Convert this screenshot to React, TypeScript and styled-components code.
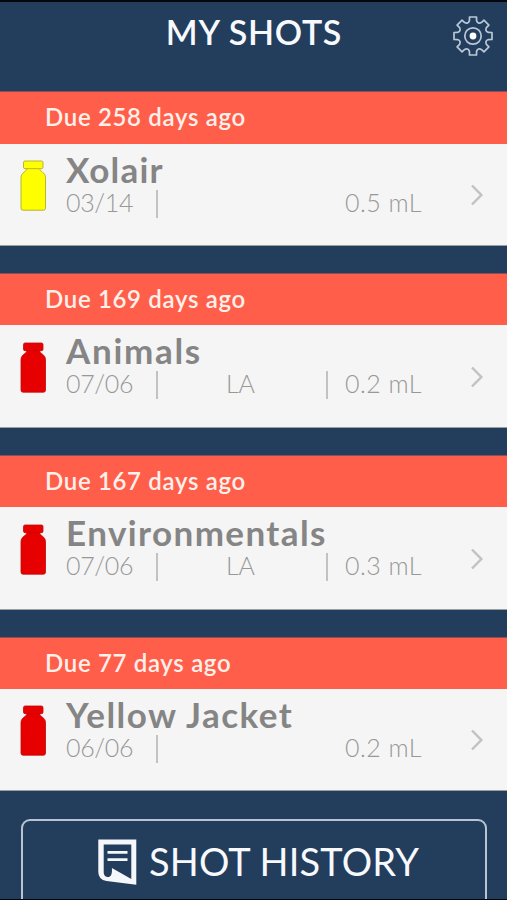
import React from "react";
import styled, { createGlobalStyle } from "styled-components";

const GlobalStyle = createGlobalStyle`
  * { box-sizing: border-box; }
  body { margin: 0; background: #000; }
`;

const Screen = styled.main`
  width: 507px;
  height: 900px;
  overflow: hidden;
  display: flex;
  flex-direction: column;
  background: #233d5d;
  border-top: 2px solid #04080d;
  border-bottom: 1px solid #02060b;
  font-family: Lato, "Open Sans", sans-serif;
`;

const Header = styled.header`
  flex: none;
  height: 89.4px;
  display: grid;
  grid-template-columns: 54px 1fr 54px;
  align-items: start;
`;

const Title = styled.h1`
  grid-column: 2;
  margin: 0;
  padding: 9px 0 0 1px;
  font-size: 34px;
  line-height: 41px;
  font-weight: 600;
  letter-spacing: 0.75px;
  text-align: center;
  color: #f7f9fc;
`;

const SettingsButton = styled.button`
  width: 42px;
  height: 42px;
  margin: 13px 0 0 -1px;
  padding: 0;
  border: 0;
  background: none;
  svg { display: block; }
`;

const ShotList = styled.section`
  flex: none;
  display: flex;
  flex-direction: column;
  gap: 27.1px;
`;

const Card = styled.article`
  height: 154.7px;
  display: flex;
  flex-direction: column;
`;

const DueBanner = styled.div`
  flex: none;
  height: 52.2px;
  padding: 10px 0 0 45px;
  border-top: 1px solid #8d4d59;
  background: #ff5f4a;
  color: #fff0ea;
  font-size: 24px;
  line-height: 30px;
  font-weight: 600;
  letter-spacing: 0.67px;
`;

const ShotRow = styled.div`
  flex: 1;
  display: grid;
  grid-template-columns: 66px 1fr 41px;
  background: #f5f5f5;
  border-bottom: 1px solid #9c9f9f;
`;

const VialCell = styled.div`
  padding: 16.5px 0 0 20px;
  svg { display: block; }
`;

const Details = styled.div`
  padding-top: 5px;
`;

const ShotName = styled.h2<{ $tracking: number }>`
  margin: 0;
  font-size: 35px;
  line-height: 40px;
  font-weight: 700;
  letter-spacing: ${(p) => p.$tracking}px;
  white-space: nowrap;
  color: #858585;
`;

const Meta = styled.div`
  height: 29px;
  display: grid;
  grid-template-columns: 89.500px 172px 1fr;
  font-size: 25px;
  line-height: 27px;
  font-weight: 300;
  color: #989898;
`;

const DateText = styled.span`
  letter-spacing: -0.35px;
`;

const Arm = styled.span<{ $divided: boolean }>`
  margin-top: 1px;
  height: 28px;
  padding-right: 2px;
  line-height: 25px;
  text-align: center;
  border-left: 2px solid #c2c2c2;
  border-right: ${(p) => (p.$divided ? "2px solid #c2c2c2" : "0")};
`;

const Dose = styled.span`
  padding-left: 17.5px;
  letter-spacing: 0.45px;
  white-space: nowrap;
`;

const ChevronCell = styled.div`
  padding: 40.5px 0 0 4px;
  svg { display: block; }
`;

const HistoryButton = styled.button`
  flex: none;
  width: 466px;
  height: 100px;
  margin: 27.5px 0 0 21px;
  padding: 18px 0 0 75px;
  display: flex;
  align-items: flex-start;
  gap: 12px;
  border: 2px solid #b9c4d1;
  border-radius: 9px;
  background: none;
  color: #f7f9fd;
  font-family: inherit;
  font-size: 38px;
  line-height: 45px;
  font-weight: 400;
  letter-spacing: 0.15px;
  text-align: left;
  white-space: nowrap;
  svg { flex: none; }
`;

const gearPath = (() => {
  const at = (r: number, deg: number) => {
    const a = (deg * Math.PI) / 180;
    return `${(21 + r * Math.sin(a)).toFixed(2)} ${(21 - r * Math.cos(a)).toFixed(2)}`;
  };
  let d = "";
  for (let i = 0; i < 8; i++) {
    const c = i * 45;
    d += `${i ? "L" : "M"}${at(15.8, c - 13)} L${at(19.3, c - 10.5)} L${at(19.3, c + 10.5)} L${at(15.8, c + 13)} Q${at(12.7, c + 22.5)} ${at(15.8, c + 32)} `;
  }
  return d + "Z";
})();

const Gear = () => (
  <svg width="42" height="42" viewBox="0 0 42 42" fill="none" stroke="#bac7d6" strokeWidth="1.7" strokeLinejoin="round">
    <path d={gearPath} />
    <circle cx="21" cy="21" r="8.2" />
    <circle cx="21" cy="21" r="3.4" fill="#fff" stroke="none" />
  </svg>
);

const Vial = ({ fill, edge }: { fill: string; edge: string }) => (
  <svg width="27" height="52" viewBox="0 0 27 52" fill={fill} stroke={edge} strokeWidth="0.8" strokeLinejoin="round">
    <path d="M5 1h16.5q1.5 0 1.5 1.5v4.7q0 1.5-1.5 1.5h-1.8c0 3 5.800 3.5 5.800 9v30.500q0 2-2 2h-20.500q-2 0-2-2v-30.500c0-5.500 5.800-6 5.800-9h-1.800q-1.500 0-1.500-1.500v-4.700q0-1.500 1.500-1.500z" />
    <path d="M6.500 8.700h13" />
  </svg>
);

const Chevron = () => (
  <svg width="14" height="22" viewBox="0 0 14 22" fill="none" stroke="#c2c2c2" strokeWidth="2.5">
    <path d="M2 1.5l9.3 9.5L2 20.5" />
  </svg>
);

const Page = () => (
  <svg width="39" height="47" viewBox="0 0 39 47" fill="#f5f7fb">
    <path fillRule="evenodd" d="M.3.5h38v45.300L8.500 42Q.3 40.500.3 33zM5.700 5.500v27.500c0 4 2.300 5 4.500 5s4.200-2 3.700-9L33.300 40V5.500z" />
    <path d="M9.500 12h20v2.700h-20zM9.500 19.200h20v2.700h-20z" />
  </svg>
);

const yellow = { fill: "#ffff00", edge: "#a5a51c" };
const red = { fill: "#e60000", edge: "#c40808" };

const shots = [
  { due: 258, name: "Xolair", tracking: 1.2, date: "03/14", arm: "", dose: "0.5 mL", vial: yellow },
  { due: 169, name: "Animals", tracking: 1.7, date: "07/06", arm: "LA", dose: "0.2 mL", vial: red },
  { due: 167, name: "Environmentals", tracking: 1.4, date: "07/06", arm: "LA", dose: "0.3 mL", vial: red },
  { due: 77, name: "Yellow Jacket", tracking: 1.5, date: "06/06", arm: "", dose: "0.2 mL", vial: red },
];

export default function App() {
  return (
    <Screen>
      <GlobalStyle />
      <Header>
        <Title>MY SHOTS</Title>
        <SettingsButton aria-label="Settings"><Gear /></SettingsButton>
      </Header>
      <ShotList>
        {shots.map((s) => (
          <Card key={s.name}>
            <DueBanner>{`Due ${s.due} days ago`}</DueBanner>
            <ShotRow>
              <VialCell><Vial {...s.vial} /></VialCell>
              <Details>
                <ShotName $tracking={s.tracking}>{s.name}</ShotName>
                <Meta>
                  <DateText>{s.date}</DateText>
                  <Arm $divided={s.arm !== ""}>{s.arm}</Arm>
                  <Dose>{s.dose}</Dose>
                </Meta>
              </Details>
              <ChevronCell><Chevron /></ChevronCell>
            </ShotRow>
          </Card>
        ))}
      </ShotList>
      <HistoryButton><Page />SHOT HISTORY</HistoryButton>
    </Screen>
  );
}
